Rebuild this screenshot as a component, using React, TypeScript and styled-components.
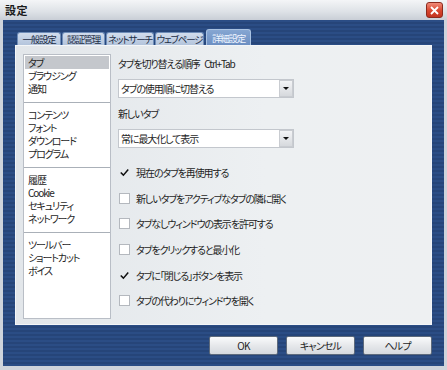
import styled, { createGlobalStyle } from "styled-components";

const GlobalStyle = createGlobalStyle`
  html, body {
    margin: 0;
    padding: 0;
    background: #ffffff;
  }
  body {
    font-family: "Noto Sans CJK JP", "Liberation Sans", sans-serif;
  }
`;

const Window = styled.div`
  width: 447px;
  height: 370px;
  box-sizing: border-box;
  display: flex;
  flex-direction: column;
  background: #cfd4db;
  font-family: "Noto Sans CJK JP", "Liberation Sans", sans-serif;
  font-feature-settings: "palt";
  font-size: 10px;
  letter-spacing: -1.1px;
  color: #1e1e1e;
`;

const TitleBar = styled.div`
  height: 20px;
  flex-shrink: 0;
  display: flex;
  align-items: center;
  justify-content: space-between;
  padding: 0 4px 0 5px;
  background: linear-gradient(#f4f5f7, #dde1e6 60%, #c9ced6);
`;

const Title = styled.span`
  font-size: 11px;
  font-weight: 700;
  color: #1a1a1a;
  letter-spacing: 0.5px;
`;

const CloseButton = styled.div`
  width: 17px;
  height: 16px;
  border-radius: 3px;
  background: linear-gradient(#f08a78, #d8452e 55%, #c23320);
  border: 1px solid #8c2a1e;
  box-sizing: border-box;
  display: flex;
  align-items: center;
  justify-content: center;
`;

const Body = styled.div`
  flex: 1;
  margin: 0 3px 4px 3px;
  padding: 9px 12px 0 12px;
  display: flex;
  flex-direction: column;
  background: repeating-linear-gradient(#2b4d85 0px, #2b4d85 2px, #264579 2px, #264579 4px);
`;

const TabStrip = styled.div`
  display: flex;
  align-items: flex-end;
  height: 16px;
  padding-left: 2px;
  gap: 1px;
`;

const Tab = styled.div<{ $active?: boolean; $w: number }>`
  width: ${(p) => p.$w}px;
  height: ${(p) => (p.$active ? 16 : 13)}px;
  flex-shrink: 0;
  box-sizing: border-box;
  display: flex;
  align-items: center;
  justify-content: center;
  border-radius: 3px 3px 0 0;
  border: 1px solid ${(p) => (p.$active ? "#a9c2e2" : "#6f8db8")};
  border-bottom: none;
  background: ${(p) =>
    p.$active ? "linear-gradient(#86a6d2, #6c8fc2)" : "linear-gradient(#d2dded, #b3c4dc)"};
  color: ${(p) => (p.$active ? "#eef4ff" : "#1c2c44")};
  font-size: 9.5px;
  letter-spacing: -1.2px;
  white-space: nowrap;
  margin-left: ${(p) => (p.$active ? 1 : 0)}px;
`;

const Panel = styled.div`
  width: 417px;
  height: 280px;
  box-sizing: border-box;
  display: flex;
  gap: 7px;
  padding: 8px 0 0 7px;
  background: linear-gradient(90deg, #e2e6ea, #edf0f2 60%, #eef0f2);
  border: 1px solid #f4f6f8;
`;

const ListBox = styled.div`
  width: 88px;
  height: 265px;
  box-sizing: border-box;
  background: #ffffff;
  border: 1px solid #b9bec6;
  display: flex;
  flex-direction: column;
`;

const ListGroup = styled.div<{ $first?: boolean; $last?: boolean }>`
  padding: ${(p) => (p.$first ? 1 : 5)}px 0 ${(p) => (p.$last ? 0 : 7)}px 0;
  border-bottom: ${(p) => (p.$last ? "none" : "1px solid #aab0b8")};
`;

const ListItem = styled.div<{ $selected?: boolean }>`
  height: 13px;
  line-height: 13px;
  padding-left: 3px;
  margin: 0 1px;
  background: ${(p) => (p.$selected ? "#c4c7cc" : "transparent")};
  white-space: nowrap;
`;

const Settings = styled.div`
  width: 176px;
  display: flex;
  flex-direction: column;
`;

const FieldLabel = styled.div<{ $top: number }>`
  margin-top: ${(p) => p.$top}px;
  height: 13px;
  line-height: 13px;
  white-space: nowrap;
`;

const Select = styled.div`
  margin-top: 9px;
  height: 19px;
  box-sizing: border-box;
  background: #ffffff;
  border: 1px solid #c3c7cd;
  display: flex;
  align-items: center;
  justify-content: space-between;
  padding-left: 2px;
`;

const SelectText = styled.span`
  white-space: nowrap;
`;

const DropButton = styled.div`
  width: 14px;
  height: 17px;
  box-sizing: border-box;
  border: 1px solid #c9ccd1;
  background: linear-gradient(#f3f4f6, #d6d9dd);
  display: flex;
  align-items: center;
  justify-content: center;
`;

const Arrow = styled.div`
  width: 0;
  height: 0;
  border-left: 3px solid transparent;
  border-right: 3px solid transparent;
  border-top: 3px solid #111111;
`;

const CheckList = styled.div`
  margin-top: 12px;
  display: flex;
  flex-direction: column;
`;

const CheckRow = styled.div`
  height: 25.6px;
  display: flex;
  align-items: center;
  gap: 6px;
  white-space: nowrap;
`;

const Box = styled.div<{ $checked?: boolean }>`
  width: 11px;
  height: 11px;
  flex-shrink: 0;
  box-sizing: border-box;
  margin-left: 1px;
  border: 1px solid ${(p) => (p.$checked ? "transparent" : "#b4b8be")};
  background: ${(p) => (p.$checked ? "transparent" : "#ffffff")};
  display: flex;
  align-items: center;
  justify-content: center;
`;

const ButtonRow = styled.div`
  width: 417px;
  margin-top: 11px;
  display: flex;
  justify-content: flex-end;
  gap: 8px;
`;

const Button = styled.div`
  width: 69px;
  height: 19px;
  box-sizing: border-box;
  border: 1px solid #5d6a7c;
  border-radius: 2px;
  background: linear-gradient(#fafbfc, #e6e8eb 50%, #d5d9de);
  display: flex;
  align-items: center;
  justify-content: center;
  color: #1e1e1e;
  letter-spacing: -0.8px;
`;

const tabs = [
  { label: "一般設定", w: 44 },
  { label: "認証管理", w: 43 },
  { label: "ネットサーチ", w: 48 },
  { label: "ウェブページ", w: 49 },
  { label: "詳細設定", w: 45, active: true },
];

const groups = [
  ["タブ", "ブラウジング", "通知"],
  ["コンテンツ", "フォント", "ダウンロード", "プログラム"],
  ["履歴", "Cookie", "セキュリティ", "ネットワーク"],
  ["ツールバー", "ショートカット", "ボイス"],
];

const checks = [
  { label: "現在のタブを再使用する", checked: true },
  { label: "新しいタブをアクティブなタブの隣に開く", checked: false },
  { label: "タブなしウィンドウの表示を許可する", checked: false },
  { label: "タブをクリックすると最小化", checked: false },
  { label: "タブに「閉じる」ボタンを表示", checked: true },
  { label: "タブの代わりにウィンドウを開く", checked: false },
];

const CheckMark = () => (
  <svg width="12" height="11" viewBox="0 0 12 11">
    <path d="M1 5.5 L4.5 9 L11 1.5" fill="none" stroke="#111" strokeWidth="2" />
  </svg>
);

export default function App() {
  return (
    <>
      <GlobalStyle />
      <Window>
        <TitleBar>
          <Title>設定</Title>
          <CloseButton>
            <svg width="9" height="9" viewBox="0 0 9 9">
              <path d="M1 1 L8 8 M8 1 L1 8" stroke="#fff" strokeWidth="1.8" />
            </svg>
          </CloseButton>
        </TitleBar>
        <Body>
          <TabStrip>
            {tabs.map((t) => (
              <Tab key={t.label} $active={t.active} $w={t.w}>
                {t.label}
              </Tab>
            ))}
          </TabStrip>
          <Panel>
            <ListBox>
              {groups.map((g, gi) => (
                <ListGroup key={gi} $first={gi === 0} $last={gi === groups.length - 1}>
                  {g.map((item) => (
                    <ListItem key={item} $selected={item === "タブ"}>
                      {item}
                    </ListItem>
                  ))}
                </ListGroup>
              ))}
            </ListBox>
            <Settings>
              <FieldLabel $top={3}>タブを切り替える順序&nbsp;&nbsp;&nbsp;&nbsp;Ctrl+Tab</FieldLabel>
              <Select>
                <SelectText>タブの使用順に切替える</SelectText>
                <DropButton>
                  <Arrow />
                </DropButton>
              </Select>
              <FieldLabel $top={9}>新しいタブ</FieldLabel>
              <Select>
                <SelectText>常に最大化して表示</SelectText>
                <DropButton>
                  <Arrow />
                </DropButton>
              </Select>
              <CheckList>
                {checks.map((c) => (
                  <CheckRow key={c.label}>
                    <Box $checked={c.checked}>{c.checked ? <CheckMark /> : null}</Box>
                    {c.label}
                  </CheckRow>
                ))}
              </CheckList>
            </Settings>
          </Panel>
          <ButtonRow>
            <Button>OK</Button>
            <Button>キャンセル</Button>
            <Button>ヘルプ</Button>
          </ButtonRow>
        </Body>
      </Window>
    </>
  );
}
